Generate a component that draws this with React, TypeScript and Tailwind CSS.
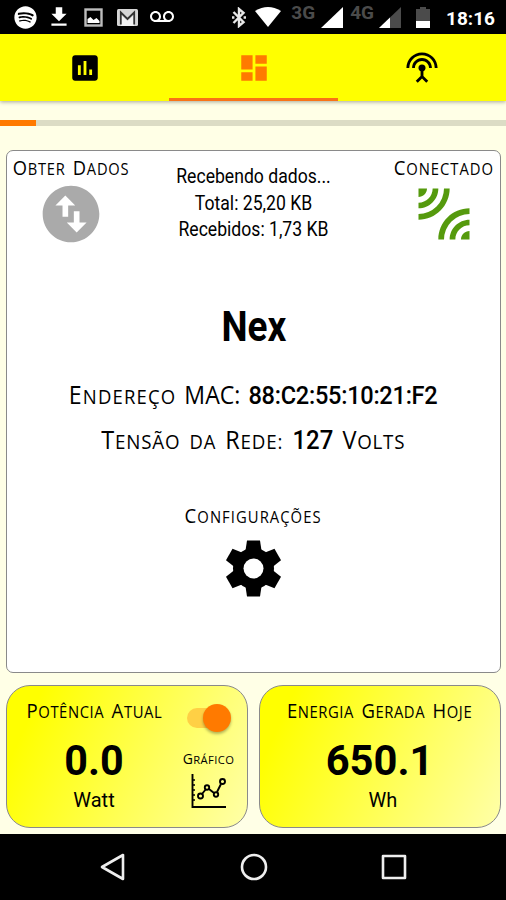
import React from 'react';
import { FaSpotify } from 'react-icons/fa';
import {
  MdAssessment,
  MdDashboard,
  MdFileDownload,
  MdLeakAdd,
  MdSettingsInputAntenna,
  MdSwapVerticalCircle,
  MdVoicemail,
} from 'react-icons/md';

// Small caps label: every word starts with a taller letter
const Caps: React.FC<{ text: string; className?: string }> = ({ text, className = '' }) => (
  <span className={`inline-flex items-baseline gap-[0.4em] whitespace-nowrap font-['Open_Sans','Noto_Sans',sans-serif] ${className}`}>
    {text.split(' ').map((word, i) => (
      <span key={i} className="inline-block uppercase text-[0.8em] first-letter:text-[1.25em]">
        {word}
      </span>
    ))}
  </span>
);

const StatusBar: React.FC = () => (
  <header className="h-[34px] bg-black text-white flex items-center justify-between pl-[14px] pr-[11px]">
    <div className="flex items-center">
      <FaSpotify className="size-[23px]" />
      <MdFileDownload className="size-[26px] ml-[9px]" />
      <svg className="w-[19px] h-[19px] ml-[12px]" viewBox="0 0 19 19">
        <rect x="1.5" y="1.5" width="16" height="16" fill="none" stroke="#bdbdbd" strokeWidth="2.4" />
        <path d="M3.5 15V11l3-2 3 3 3-2 3 3v2z" fill="#fff" />
      </svg>
      <svg className="w-[21px] h-[17px] ml-[14px]" viewBox="0 0 21 17">
        <rect width="21" height="17" rx="1.5" fill="#d6d6d6" />
        <path d="M4 17V6l6.5 6L17 6v11z" fill="#f2f2f2" />
        <path d="M3.8 15.5V3.5l6.7 6.5 6.7-6.5v12" fill="none" stroke="#333" strokeWidth="1.8" />
      </svg>
      <MdVoicemail className="size-[24px] ml-[12px]" />
    </div>
    <div className="flex items-center font-['Roboto',sans-serif]">
      <svg className="w-[14px] h-[21px]" viewBox="0 0 14 21" fill="none" stroke="#e8e8e8" strokeWidth="2.4">
        <path d="M1.5 5l10 10.2L7 19V2l4.5 3.8L1.5 16" />
        <path d="M0 10.5h2.4M11.6 10.5H14" />
      </svg>
      <svg className="w-[26px] h-[20px] ml-[9px]" viewBox="0 0 26 20">
        <path d="M0 4Q13-4 26 4L13 20z" fill="#fff" />
      </svg>
      <span className="ml-[10px] -mt-[9px] text-[19px] leading-none font-bold text-[#4b4b4b]">3G</span>
      <svg className="w-[22px] h-[21px] ml-[6px]" viewBox="0 0 22 21">
        <path d="M22 0v21H0z" fill="#fff" />
      </svg>
      <span className="ml-[7px] -mt-[9px] text-[19px] leading-none font-bold text-[#4b4b4b]">4G</span>
      <svg className="w-[22px] h-[21px] ml-[5px]" viewBox="0 0 22 21">
        <path d="M22 0v21H0z" fill="#4b4b4b" />
        <path d="M11 10.5V21H0z" fill="#fff" />
      </svg>
      <svg className="w-[14px] h-[21px] ml-[15px]" viewBox="0 0 14 21">
        <path d="M4 0h6v2h4v12H0V2h4z" fill="#4b4b4b" />
        <path d="M0 14h14v7H0z" fill="#fff" />
      </svg>
      <span className="ml-[16px] mt-[2px] text-[19px] leading-none font-bold">18:16</span>
    </div>
  </header>
);

const Tabs: React.FC = () => (
  <nav className="relative h-[67px] bg-[#ffff00] grid grid-cols-[169px_169px_168px] shadow-[0_1px_4px_rgba(0,0,0,0.35)]">
    <div className="flex items-center justify-center">
      <MdAssessment className="size-[34px] text-black" />
    </div>
    <div className="flex items-center justify-center border-b-[3px] border-[#f97316] pt-[3px]">
      <MdDashboard className="size-[34px] text-[#ff7a00]" />
    </div>
    <div className="flex items-center justify-center">
      <MdSettingsInputAntenna className="size-[34px] text-black" />
    </div>
  </nav>
);

const Gear: React.FC = () => (
  <svg className="size-[57px] mt-[10px]" viewBox="-28.5 -28.5 57 57">
    <circle r="20.5" />
    <path d="M-8-18L-6.5-28H6.5L8-18V18L6.5 28H-6.5L-8 18z" />
    <path d="M-8-18L-6.5-28H6.5L8-18V18L6.5 28H-6.5L-8 18z" transform="rotate(60)" />
    <path d="M-8-18L-6.5-28H6.5L8-18V18L6.5 28H-6.5L-8 18z" transform="rotate(120)" />
    <circle r="10" fill="#fff" />
  </svg>
);

const DevicePanel: React.FC = () => (
  <section className="ml-[6px] mr-[5px] mt-[24px] h-[523px] rounded-[7px] border border-[#8a8a8a] bg-white flex flex-col items-center">
    <div className="w-full h-[100px] grid grid-cols-[116px_1fr_100px] pl-[6px] pr-[6px] pt-[4px]">
      <div className="flex flex-col items-center">
        <Caps text="Obter Dados" className="text-[19.5px] leading-[26px] tracking-[0.8px] scale-x-[0.94]" />
        <MdSwapVerticalCircle className="size-[68px] text-[#aaaaaa] -mt-[2px]" />
      </div>
      <div className="relative -left-[8px] pt-[8px] text-center text-[20px] leading-[26.7px] font-['Roboto',sans-serif] scale-x-[0.88] whitespace-nowrap">
        <p>Recebendo dados...</p>
        <p>Total: 25,20 KB</p>
        <p>Recebidos: 1,73 KB</p>
      </div>
      <div className="flex flex-col items-center">
        <Caps text="Conectado" className="text-[19.5px] leading-[26px] tracking-[1px] scale-x-[0.95]" />
        <MdLeakAdd className="size-[68px] text-[#559a0d] -mt-[2px]" />
      </div>
    </div>
    <h1 className="mt-[51px] text-[42px] leading-[50px] font-bold font-['Roboto',sans-serif] scale-x-[0.88]">Nex</h1>
    <div className="mt-[22px] h-[45px] flex items-baseline justify-center gap-[9px] whitespace-nowrap scale-x-[0.89]">
      <Caps text="Endereço" className="text-[26px] leading-[40px] tracking-[1.3px]" />
      <span className="font-['Open_Sans',sans-serif] text-[26px]">MAC:</span>
      <span className="font-['Roboto',sans-serif] text-[26.5px] font-medium tracking-[-0.3px]">88:C2:55:10:21:F2</span>
    </div>
    <div className="h-[46px] flex items-baseline justify-center gap-[10px] whitespace-nowrap scale-x-[0.92]">
      <Caps text="Tensão" className="text-[25.5px] leading-[40px] tracking-[0.9px]" />
      <span className="font-['Open_Sans',sans-serif] text-[20px] uppercase tracking-[0.8px]">da</span>
      <Caps text="Rede:" className="text-[25.5px] tracking-[0.9px]" />
      <span className="font-['Roboto',sans-serif] text-[26px] font-medium">127</span>
      <Caps text="Volts" className="text-[25.5px] tracking-[0.8px]" />
    </div>
    <Caps text="Configurações" className="mt-[38px] text-[19.5px] leading-[26px] tracking-[1.1px] scale-x-[0.95]" />
    <Gear />
  </section>
);

const PowerCard: React.FC = () => (
  <section className="h-[143px] rounded-[24px] border border-[#8a8a8a] bg-[linear-gradient(115deg,#ffff00_12%,#ffffa8_100%)] flex pl-[15px] pr-[6px]">
    <div className="w-[144px] shrink-0 flex flex-col items-center pt-[12px]">
      <Caps text="Potência Atual" className="text-[19.5px] leading-[26px] tracking-[0.6px] scale-x-[0.95]" />
      <strong className="mt-[10px] text-[43px] leading-[50px] font-['Roboto',sans-serif] font-bold scale-x-[0.96]">0.0</strong>
      <span className="text-[20px] leading-[30px] font-['Roboto',sans-serif]">Watt</span>
    </div>
    <div className="flex-1 flex flex-col items-center pl-[10px]">
      <div className="mt-[18px] w-[44px] h-[28px] flex items-center justify-end relative">
        <span className="absolute left-0 w-[38px] h-[20px] rounded-full bg-[#ffd045]" />
        <span className="relative size-[28px] rounded-full bg-[#ff7a00] shadow-[0_2px_3px_rgba(0,0,0,0.3)]" />
      </div>
      <Caps text="Gráfico" className="mt-[17px] text-[14px] leading-[20px] tracking-[0.4px]" />
      <svg className="w-[35px] h-[35px] mt-[4px]" viewBox="0 0 35 35" fill="none" stroke="#000" strokeWidth="1.9">
        <path d="M1.5 0v33H35" />
        <path d="M1 6h3M1 11h3M1 16h3M1 21h3M1 26h3" strokeWidth="1.3" />
        <path d="M11 20l4-5M18 15l5 4M26 18l4-8" />
        <circle cx="9.5" cy="22" r="2.5" />
        <circle cx="16" cy="13.5" r="2.2" />
        <circle cx="25" cy="20.5" r="2.2" />
        <circle cx="31.5" cy="7.5" r="2.5" />
      </svg>
    </div>
  </section>
);

const EnergyCard: React.FC = () => (
  <section className="h-[143px] rounded-[24px] border border-[#8a8a8a] bg-[linear-gradient(115deg,#ffff00_12%,#ffffa8_100%)] flex flex-col items-center pt-[12px]">
    <Caps text="Energia Gerada Hoje" className="text-[19.5px] leading-[26px] tracking-[0.6px] scale-x-[0.95]" />
    <strong className="mt-[10px] text-[43px] leading-[50px] font-['Roboto',sans-serif] font-bold scale-x-[0.97]">650.1</strong>
    <span className="pl-[6px] text-[20px] leading-[30px] font-['Roboto',sans-serif]">Wh</span>
  </section>
);

const NavBar: React.FC = () => (
  <footer className="h-[66px] bg-black flex items-center justify-between pl-[99px] pr-[98px]">
    <svg className="w-[28px] h-[28px]" viewBox="0 0 28 28" fill="none" stroke="#eee" strokeWidth="2.6" strokeLinejoin="round">
      <path d="M24 2v24L3 14z" />
    </svg>
    <svg className="w-[28px] h-[28px]" viewBox="0 0 28 28" fill="none" stroke="#eee" strokeWidth="2.6">
      <circle cx="14" cy="14" r="12" />
    </svg>
    <svg className="w-[28px] h-[28px]" viewBox="0 0 28 28" fill="none" stroke="#eee" strokeWidth="2.6" strokeLinejoin="round">
      <path d="M3 3h22v22H3z" />
    </svg>
  </footer>
);

const App: React.FC = () => {
  return (
    <div className="w-[506px] h-[900px] bg-[#ffffe6] text-black flex flex-col overflow-hidden">
      <StatusBar />
      <Tabs />
      <div className="mt-[19px] h-[6px] bg-[#dcdcc5]">
        <div className="w-[36px] h-full bg-[#ff7a00]" />
      </div>
      <DevicePanel />
      <div className="ml-[6px] mr-[5px] mt-[12px] mb-auto grid grid-cols-2 gap-[11px]">
        <PowerCard />
        <EnergyCard />
      </div>
      <NavBar />
    </div>
  );
};

export default App;
